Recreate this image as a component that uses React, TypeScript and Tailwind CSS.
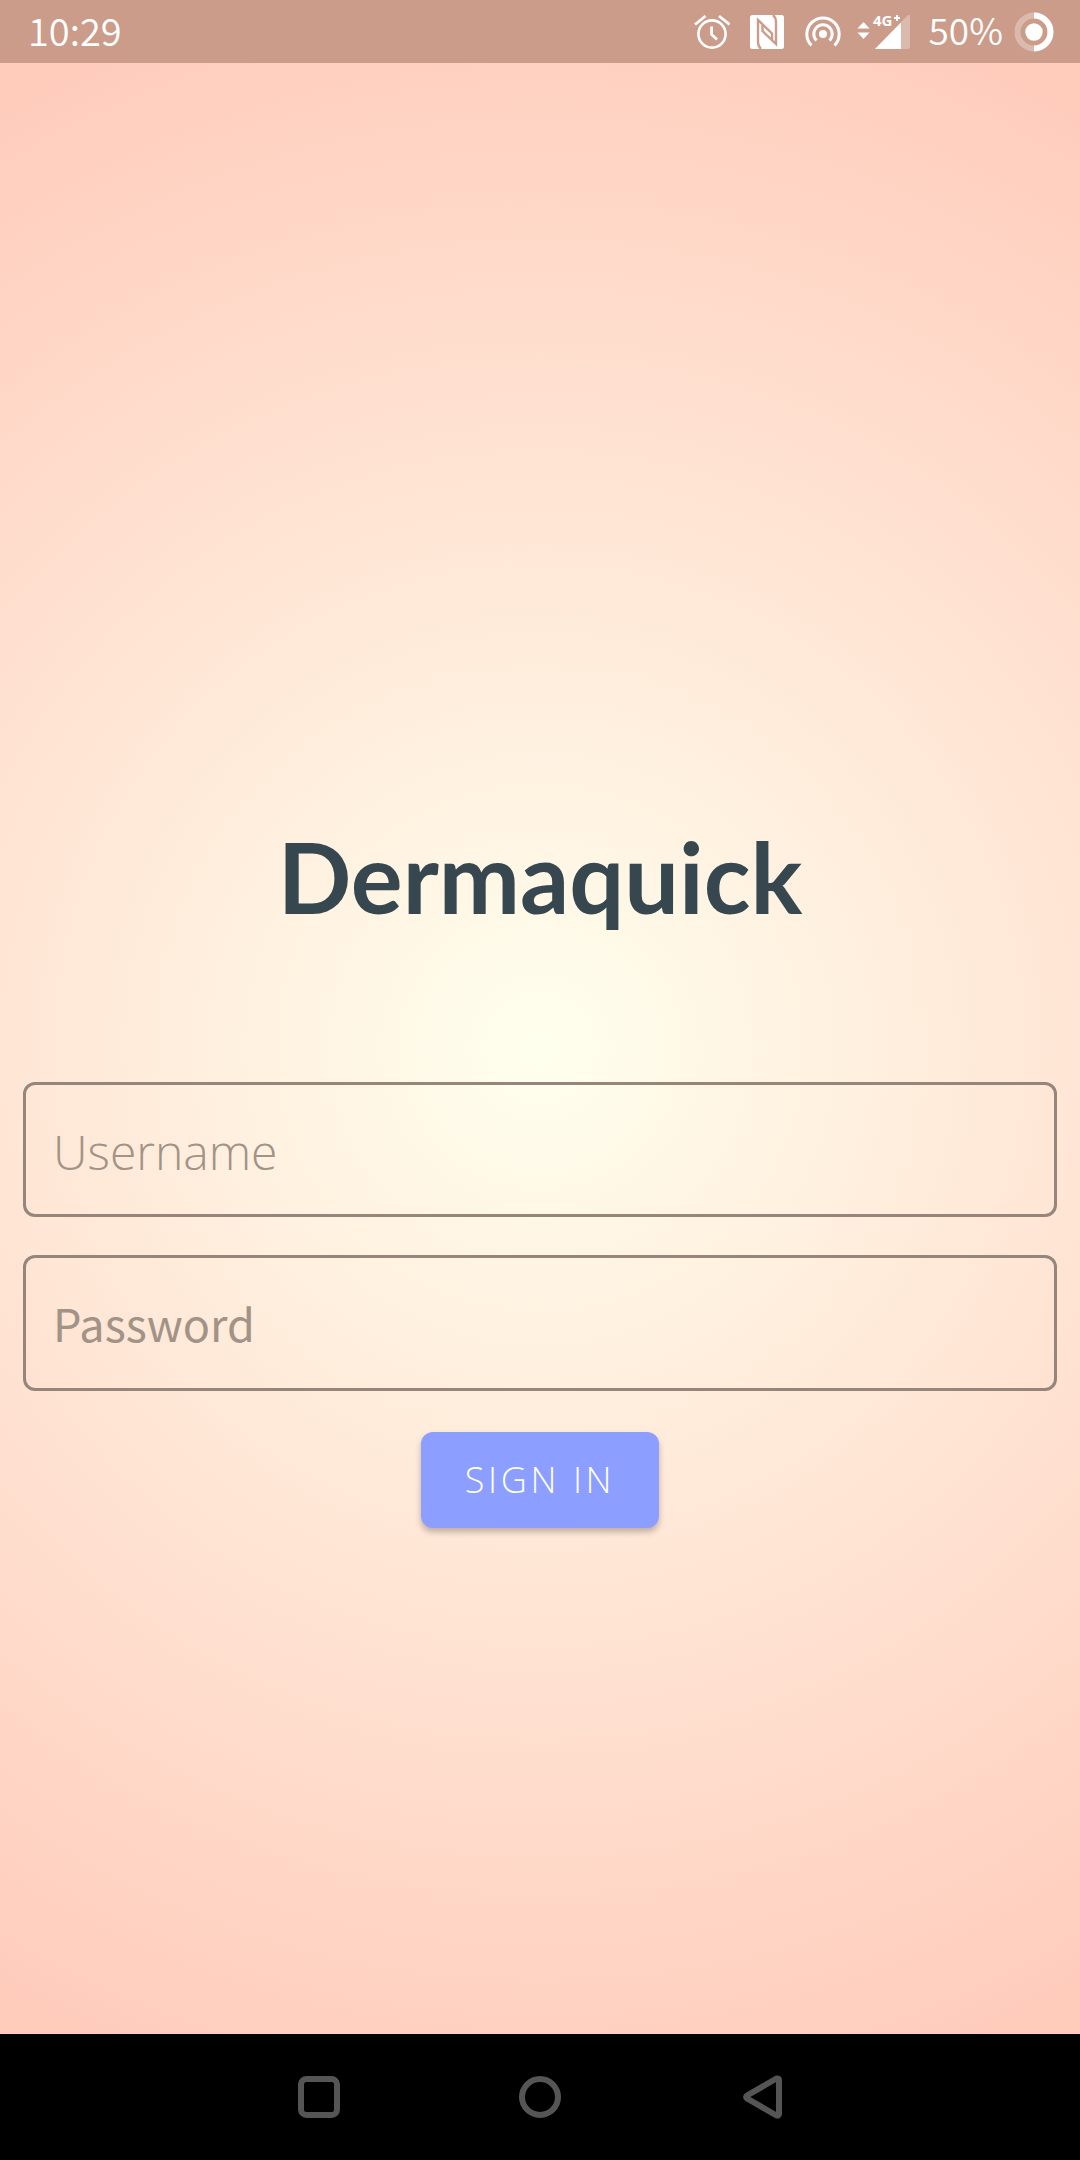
import React, { useState } from "react";

function AlarmIcon() {
  return (
    <svg width="36" height="36" viewBox="0 0 36 36" fill="none" stroke="#fff" aria-hidden="true">
      <circle cx="18" cy="20" r="13.6" strokeWidth="2.6" />
      <path d="M17.6 12.5V20.5L23 25.5" strokeWidth="2.8" />
      <path d="M1 10.5L11.5 2M25 2L35.5 10.5" strokeWidth="2.8" />
    </svg>
  );
}

function NfcIcon() {
  return (
    <svg width="34" height="34" viewBox="0 0 34 34" aria-hidden="true">
      <rect width="34" height="34" rx="2.5" fill="#fff" />
      <g fill="none" stroke="#cb9c8a" strokeWidth="2.4">
        <path d="M11 34Q8 31.5 8 27V5L22 18.5V25" />
        <path d="M23 0Q26 2.5 26 7V29L12.500 16V10" />
      </g>
    </svg>
  );
}

function HotspotIcon() {
  return (
    <svg width="36" height="32" viewBox="0 0 36 32" fill="none" stroke="#fff" strokeWidth="3" aria-hidden="true">
      <circle cx="18" cy="18" r="4" fill="#fff" stroke="none" />
      <path d="M11.500 24.500A9.200 9.200 0 1 1 24.500 24.500" />
      <path d="M6.500 29.500A16.200 16.200 0 1 1 29.500 29.500" />
    </svg>
  );
}

function SignalIcon() {
  return (
    <svg width="54" height="36" viewBox="0 0 54 36" fill="#fff" className="overflow-visible" aria-hidden="true">
      <path d="M6.500 8L12.500 14.500H0.500ZM0.500 18.500H12.500L6.500 25Z" />
      <path d="M18 35L50.500 1.500Q53 -0.500 53 2.500V33Q53 35 51 35Z" opacity="0.3" />
      <path d="M18 35L44 8.500V35Z" />
      <text x="16" y="12" fontSize="15" fontWeight="700" fontFamily="'Noto Sans', sans-serif">4G</text>
      <path d="M37 4H43M40 1V7" stroke="#fff" strokeWidth="2" />
    </svg>
  );
}

function BatteryIcon() {
  return (
    <svg width="40" height="40" viewBox="0 0 40 40" aria-hidden="true">
      <circle cx="20" cy="20" r="16.500" fill="none" stroke="#fff" strokeWidth="6" opacity="0.3" />
      <path d="M20 3.500A16.500 16.500 0 0 1 20 36.500" fill="none" stroke="#fff" strokeWidth="6" />
      <circle cx="20" cy="20" r="8.700" fill="#fff" />
    </svg>
  );
}

function StatusBar() {
  return (
    <header className="flex h-[63px] shrink-0 items-center justify-between bg-[#cb9c8a] pl-7 pr-[26px] font-['Noto_Sans_CJK_SC',sans-serif] text-[38px] leading-none font-[350] text-white">
      <time className="pb-1">10:29</time>
      <div className="flex items-center">
        <AlarmIcon />
        <span className="ml-5"><NfcIcon /></span>
        <span className="ml-[21px]"><HotspotIcon /></span>
        <span className="ml-4"><SignalIcon /></span>
        <span className="ml-[18px] pb-1 text-[37px] leading-none">50%</span>
        <span className="ml-[11px]"><BatteryIcon /></span>
      </div>
    </header>
  );
}

const fieldClass =
  "w-full rounded-xl border-3 border-[#96857a] bg-transparent px-[27px] text-[#37474f] outline-none placeholder:text-[#a29387] placeholder:opacity-100";

function SignInForm() {
  const [username, setUsername] = useState("");
  const [password, setPassword] = useState("");
  return (
    <form className="flex w-full flex-col items-center px-[23px]" onSubmit={(e) => e.preventDefault()}>
      <input
        type="text"
        aria-label="Username"
        placeholder="Username"
        value={username}
        onChange={(e) => setUsername(e.target.value)}
        className={`${fieldClass} h-[135px] pt-1 font-['Open_Sans',sans-serif] text-[48px] font-light`}
      />
      <input
        type="password"
        aria-label="Password"
        placeholder="Password"
        value={password}
        onChange={(e) => setPassword(e.target.value)}
        className={`${fieldClass} mt-[38px] h-[136px] font-['Noto_Sans_CJK_SC',sans-serif] text-[45px]`}
      />
      <button
        type="submit"
        className="mt-[41px] h-24 rounded-xl bg-[#8c9eff] px-11 font-['Open_Sans',sans-serif] text-[36px] font-light tracking-widest text-white shadow-[0_4px_6px_rgba(0,0,0,0.25)]"
      >
        SIGN IN
      </button>
    </form>
  );
}

function NavBar() {
  return (
    <nav className="flex h-[126px] shrink-0 items-center justify-center gap-[177px] bg-black">
      <button type="button" aria-label="Recent apps">
        <svg width="44" height="44" viewBox="0 0 44 44" fill="none" stroke="#555" strokeWidth="6">
          <rect x="4" y="4" width="36" height="36" rx="5.500" />
        </svg>
      </button>
      <button type="button" aria-label="Home">
        <svg width="44" height="44" viewBox="0 0 44 44" fill="none" stroke="#555" strokeWidth="6">
          <circle cx="22" cy="22" r="18" />
        </svg>
      </button>
      <button type="button" aria-label="Back">
        <svg width="44" height="44" viewBox="0 0 44 44" fill="none" stroke="#555" strokeWidth="6" strokeLinejoin="round">
          <path d="M8 20.500L37.500 3.500Q40 3 40 5V39Q40 41 37.500 40.500L8 23.500Q6.500 22 8 20.500Z" />
        </svg>
      </button>
    </nav>
  );
}

export default function App() {
  return (
    <div className="flex min-h-screen flex-col">
      <StatusBar />
      <main className="flex flex-1 flex-col items-center justify-center bg-[radial-gradient(circle_at_center,#ffffee_0,#ffccbc_100vw)] pt-[243px]">
        <h1 className="mb-[141px] font-['Lato',sans-serif] text-[97px] leading-[128px] font-bold text-[#37474f]">Dermaquick</h1>
        <SignInForm />
      </main>
      <NavBar />
    </div>
  );
}
